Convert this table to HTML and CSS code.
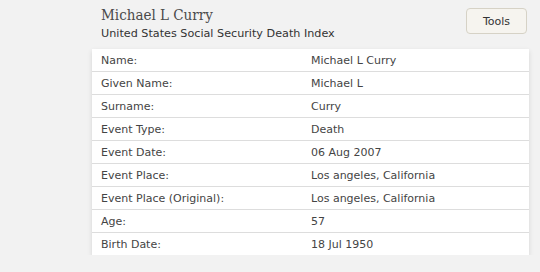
FILE: index.html
```html
<!DOCTYPE html>
<html lang="en">

<head>
    <meta charset="UTF-8">
    <title>Michael L Curry</title>
    <link rel="stylesheet" href="styles.css">
</head>

<body>
    <div class="record">
        <!-- 标题 + 工具按钮 -->
        <div class="record-head">
            <div class="record-title">
                <h1>Michael L Curry</h1>
                <p>United States Social Security Death Index</p>
            </div>
            <button class="tools">Tools</button>
        </div>
        <!-- 记录字段 -->
        <table class="fields">
            <tr><td class="label">Name:</td><td>Michael L Curry</td></tr>
            <tr><td class="label">Given Name:</td><td>Michael L</td></tr>
            <tr><td class="label">Surname:</td><td>Curry</td></tr>
            <tr><td class="label">Event Type:</td><td>Death</td></tr>
            <tr><td class="label">Event Date:</td><td>06 Aug 2007</td></tr>
            <tr><td class="label">Event Place:</td><td>Los angeles, California</td></tr>
            <tr><td class="label">Event Place (Original):</td><td>Los angeles, California</td></tr>
            <tr><td class="label">Age:</td><td>57</td></tr>
            <tr><td class="label">Birth Date:</td><td>18 Jul 1950</td></tr>
        </table>
    </div>
</body>

</html>
```

FILE: styles.css
```css
* {
    padding: 0;
    margin: 0
}

body {
    background-color: #f2f2f2;
    font-family: "DejaVu Sans", Verdana, sans-serif;
    color: #444;
}

.record {
    width: 437px;
    margin-left: 92px;
    padding-top: 5px;
}

.record-head {
    display: flex;
    justify-content: space-between;
    align-items: flex-start;
    padding-left: 9px;
    height: 44px;
}

.record-title h1 {
    font-family: "DejaVu Serif", Georgia, serif;
    font-stretch: condensed;
    font-weight: normal;
    font-size: 15px;
    line-height: 21px;
    color: #4a4a4a;
}

.record-title p {
    font-size: 11.2px;
    line-height: 16px;
    color: #333;
}

.tools {
    width: 61px;
    height: 26px;
    margin-top: 3px;
    margin-right: 2px;
    background-color: #f6f4ef;
    border: 1px solid #d6d2c6;
    border-radius: 4px;
    font-family: "DejaVu Sans", Verdana, sans-serif;
    font-size: 11px;
    color: #333;
}

.fields {
    width: 100%;
    border-collapse: collapse;
    background-color: #fff;
    box-shadow: 0 2px 5px rgba(0, 0, 0, .12);
    font-size: 11px;
}

.fields td {
    height: 22px;
    padding: 0 0 0 9px;
    color: #444;
    border-top: 1px solid #ddd;
}

.fields tr:first-child td {
    border-top: none;
}

.fields .label {
    width: 201px;
}
```
